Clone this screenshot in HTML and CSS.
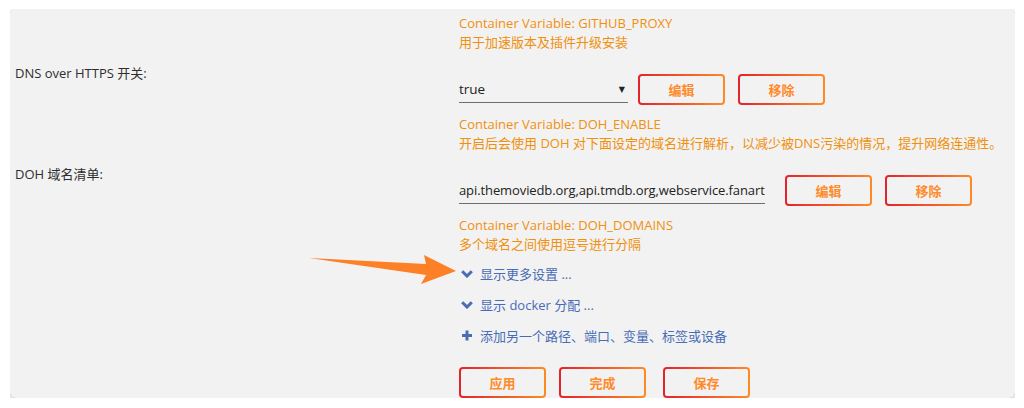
FILE: index.html
```html
<!DOCTYPE html>
<html>
<head>
    <title>Docker 容器设置</title>
    <meta name="viewport" content="width=device-width, initial-scale=1.0">
    <link rel="stylesheet" href="styles.css">
</head>
<body>
    <div class="painel">
        <!-- Variável anterior, cortada no topo -->
        <div class="linha">
            <div class="rotulo"></div>
            <div class="campo topo">
                <p class="info">Container Variable: GITHUB_PROXY<br>用于加速版本及插件升级安装</p>
            </div>
        </div>

        <div class="linha bloco">
            <div class="rotulo">DNS over HTTPS 开关:</div>
            <div class="campo">
                <div class="controles">
                    <span class="seletor">true</span>
                    <button class="botao primeiro">编辑</button>
                    <button class="botao">移除</button>
                </div>
                <p class="info">Container Variable: DOH_ENABLE<br>开启后会使用 DOH 对下面设定的域名进行解析，以减少被DNS污染的情况，提升网络连通性。</p>
            </div>
        </div>

        <div class="linha bloco">
            <div class="rotulo">DOH 域名清单:</div>
            <div class="campo">
                <div class="controles">
                    <input class="texto" type="text" value="api.themoviedb.org,api.tmdb.org,webservice.fanart.tv">
                    <button class="botao largo">编辑</button>
                    <button class="botao">移除</button>
                </div>
                <p class="info">Container Variable: DOH_DOMAINS<br>多个域名之间使用逗号进行分隔</p>
            </div>
        </div>

        <div class="linha">
            <div class="rotulo"></div>
            <div class="links">
                <a class="link">
                    <svg width="12" height="8" viewBox="0 0 12 8"><path d="M1.2 1.2 L6 6 L10.8 1.2" fill="none" stroke="#4a6cb3" stroke-width="3"/></svg>
                    显示更多设置 ...
                </a>
                <a class="link">
                    <svg width="12" height="8" viewBox="0 0 12 8"><path d="M1.2 1.2 L6 6 L10.8 1.2" fill="none" stroke="#4a6cb3" stroke-width="3"/></svg>
                    显示 docker 分配 ...
                </a>
                <a class="link">
                    <svg width="12" height="11" viewBox="0 0 12 11"><path d="M6 0.5 V10.5 M1 5.5 H11" fill="none" stroke="#4a6cb3" stroke-width="3"/></svg>
                    添加另一个路径、端口、变量、标签或设备
                </a>
            </div>
        </div>

        <div class="linha">
            <div class="rotulo"></div>
            <div class="acoes">
                <button class="botao">应用</button>
                <button class="botao meio">完成</button>
                <button class="botao">保存</button>
            </div>
        </div>
    </div>

    <!-- Seta de anotação por cima da página -->
    <svg class="seta" width="160" height="40" viewBox="300 250 160 40">
        <polygon points="309,258 426,264 424,255 456,271 421,284 426,275" fill="#fd7f26"/>
    </svg>
</body>
</html>
```

FILE: styles.css
```css
body {
    background: white;
    margin: 9px 9px 0 10px;
    font-family: "Open Sans", "Noto Sans CJK SC", sans-serif;
    font-size: 13px;
    color: #333;
}
.painel {
    background: #f2f2f2;
    border-radius: 6px;
    box-shadow: 0 1px 4px rgba(0, 0, 0, 0.3);
    height: 389px;
    padding: 5px 0 0 5px;
    box-sizing: border-box;
    overflow: hidden; /* os botões encostam na borda de baixo */
}
.linha {
    display: grid;
    grid-template-columns: 444px 1fr;
}
.bloco {
    margin-top: 11px;
}
.rotulo {
    line-height: 20px;
    color: #2e2e2e;
}
.campo {
    margin-top: 11px;
}
.campo.topo {
    margin-top: 0;
}
.controles {
    display: flex;
    align-items: center;
    height: 31px;
}
.info {
    margin: 10px 0 0;
    line-height: 19px;
    color: #f0900e;
}
.topo .info {
    margin-top: 0;
}
.seletor {
    position: relative;
    align-self: flex-end;
    width: 169px;
    box-sizing: border-box;
    font-size: 13.5px;
    color: #222;
    line-height: 20px;
    padding-bottom: 3px;
    margin-bottom: 2px;
    border-bottom: 1px solid #6e6e6e;
}
.seletor::after {
    content: "▼";
    position: absolute;
    right: 3px;
    top: 1px;
    font-family: "DejaVu Sans", sans-serif;
    font-size: 8px;
}
.texto {
    align-self: flex-end;
    width: 306px;
    padding: 0 0 3px;
    margin: 0 0 2px;
    border: none;
    border-bottom: 1px solid #6e6e6e;
    background: transparent;
    font-family: inherit;
    font-size: 13px;
    letter-spacing: -0.1px;
    color: #222;
    line-height: 20px;
    outline: none;
}
.botao {
    width: 87px;
    height: 31px;
    margin-right: 13px;
    border: 2px solid transparent;
    border-radius: 4px;
    background: linear-gradient(#f2f2f2, #f2f2f2) padding-box,
                linear-gradient(90deg, #e3232b, #ff8a25) border-box;
    font-family: inherit;
    font-size: 13px;
    font-weight: bold;
    color: #ff8a2a;
    padding: 0;
}
.primeiro {
    margin-left: 10px;
}
.largo {
    margin-left: 20px;
}
.links {
    margin-top: 4px;
}
.link {
    display: flex;
    align-items: center;
    gap: 7px;
    height: 31px;
    padding-left: 2px;
    color: #486cb6;
    font-size: 13px;
}
.acoes {
    display: flex;
    margin-top: 16px;
}
.acoes .meio {
    margin-right: 17px;
}
.seta {
    position: absolute;
    left: 300px;
    top: 250px;
}
```
